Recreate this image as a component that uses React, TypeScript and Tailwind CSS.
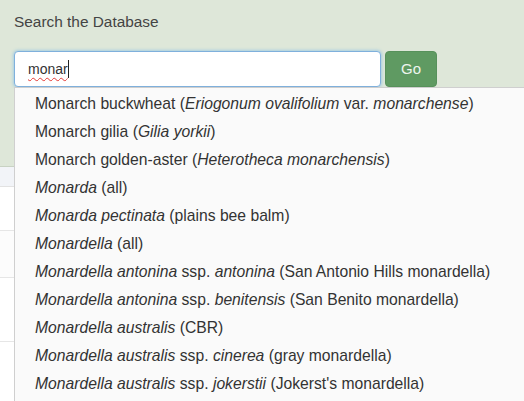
import React from "react";

type Part = { t: string; i?: boolean };

const items: Part[][] = [
  [{ t: "Monarch buckwheat (" }, { t: "Eriogonum ovalifolium", i: true }, { t: " var. " }, { t: "monarchense", i: true }, { t: ")" }],
  [{ t: "Monarch gilia (" }, { t: "Gilia yorkii", i: true }, { t: ")" }],
  [{ t: "Monarch golden-aster (" }, { t: "Heterotheca monarchensis", i: true }, { t: ")" }],
  [{ t: "Monarda", i: true }, { t: " (all)" }],
  [{ t: "Monarda pectinata", i: true }, { t: " (plains bee balm)" }],
  [{ t: "Monardella", i: true }, { t: " (all)" }],
  [{ t: "Monardella antonina", i: true }, { t: " ssp. " }, { t: "antonina", i: true }, { t: " (San Antonio Hills monardella)" }],
  [{ t: "Monardella antonina", i: true }, { t: " ssp. " }, { t: "benitensis", i: true }, { t: " (San Benito monardella)" }],
  [{ t: "Monardella australis", i: true }, { t: " (CBR)" }],
  [{ t: "Monardella australis", i: true }, { t: " ssp. " }, { t: "cinerea", i: true }, { t: " (gray monardella)" }],
  [{ t: "Monardella australis", i: true }, { t: " ssp. " }, { t: "jokerstii", i: true }, { t: " (Jokerst's monardella)" }],
];

export default function App() {
  return (
    <div className="relative w-[524px] h-[401px] overflow-hidden bg-white font-['Liberation_Sans',Arial,sans-serif] text-[#333]">
      <div className="h-[167px] bg-[#dee7d9] border-b border-[#c8d2c3] px-[14px] pt-[12px]">
        <div className="text-[15.4px] leading-[20px] text-[#444]">Search the Database</div>
        <div className="mt-[19px] flex gap-[4px]">
          <div className="w-[367px] h-[36px] bg-white border border-[#7fb0dc] rounded-[4px] shadow-[0_0_3px_1px_rgba(102,175,233,0.45)] flex items-center pl-[13px]">
            <span className="text-[14px] text-[#333] underline decoration-wavy decoration-[#e53935] decoration-1 underline-offset-[3px]">monar</span>
            <span className="w-px h-[18px] bg-[#222]" />
          </div>
          <div className="w-[52px] h-[36px] rounded-[4px] bg-[#5f9a62] border border-[#57915b] flex items-center justify-center text-[15px] font-medium text-[#eef5ee]">
            Go
          </div>
        </div>
      </div>
      <div className="h-[20px] bg-[#f2f4f8] border-b border-[#e2e2e2]" />
      <div className="h-[44px] border-b border-[#e6e6e6]" />
      <div className="h-[47px] bg-[#fcfcfc] border-b border-[#e6e6e6]" />
      <div className="h-[64px] border-b border-[#e6e6e6]" />

      <div className="absolute left-[14px] top-[87px] w-[560px] h-[330px] bg-[#fafafa] border-l border-t border-[#cfcfcf] pt-[2px] pl-[20px]">
        {items.map((row, idx) => (
          <div key={idx} className="h-[28px] flex items-center text-[15.7px] whitespace-nowrap">
            <span>
              {row.map((p, j) => (p.i ? <em key={j} className="italic">{p.t}</em> : <span key={j}>{p.t}</span>))}
            </span>
          </div>
        ))}
      </div>
    </div>
  );
}
